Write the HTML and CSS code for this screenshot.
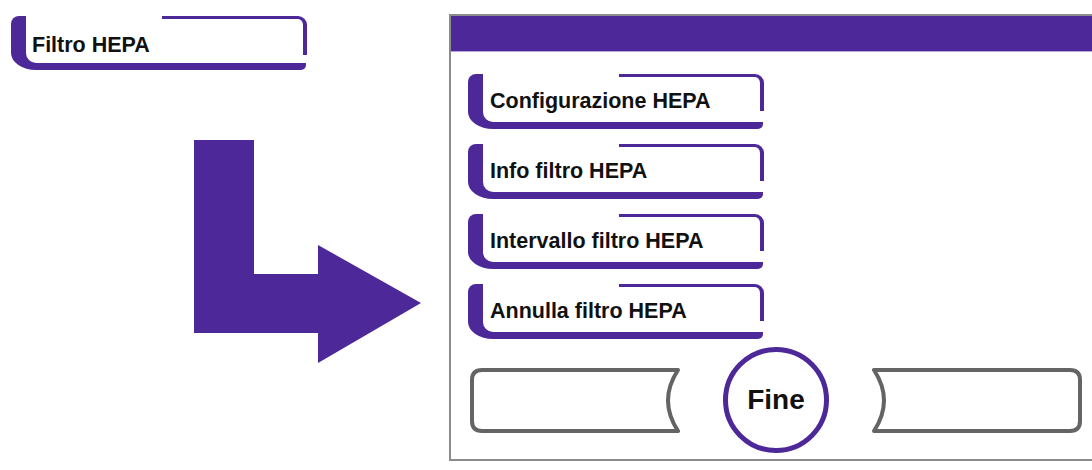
FILE: index.html
```html
<!DOCTYPE html>
<html lang="it">
<head>
    <meta charset="UTF-8">
    <meta name="viewport" content="width=device-width, initial-scale=1.0">
    <title>Filtro HEPA</title>
    <link rel="stylesheet" href="styles.css">
</head>
<body>
    <div class="page">
        <div class="side">
            <div class="tab tab-source">Filtro HEPA</div>

            <!-- arrow pointing into the submenu -->
            <svg class="arrow" width="227" height="223" viewBox="0 0 227 223">
                <polygon points="0,0 60,0 60,134 124,134 124,105 227,163 124,223 124,193 0,193" fill="#4d2899"/>
            </svg>
        </div>

        <div class="panel">
            <div class="panel-header"></div>

            <div class="menu">
                <div class="tab">Configurazione HEPA</div>
                <div class="tab">Info filtro HEPA</div>
                <div class="tab">Intervallo filtro HEPA</div>
                <div class="tab">Annulla filtro HEPA</div>
            </div>

            <div class="controls">
                <svg class="soft-key" width="210" height="65" viewBox="0 0 210 65">
                    <path d="M12 2 H208 Q188 32.5 208 63 H12 Q2 63 2 53 V12 Q2 2 12 2 Z"/>
                </svg>
                <div class="done-btn">Fine</div>
                <svg class="soft-key" width="210" height="65" viewBox="0 0 210 65">
                    <path d="M2 2 H198 Q208 2 208 12 V53 Q208 63 198 63 H2 Q22 32.5 2 2 Z"/>
                </svg>
            </div>
        </div>
    </div>
</body>
</html>
```

FILE: styles.css
```css
:root {
    --purple: #4d2899;
    --purple-light: #b8a3e3;
    --frame: #8c8c8c;
    --key: #646464;
    --ink: #111111;
}
html, body {
    margin: 0;
    padding: 0;
    background: #ffffff;
    overflow: hidden;
}
body {
    font-family: 'Liberation Sans', Arial, sans-serif;
    color: var(--ink);
    width: 1092px;
    height: 470px;
}
.page {
    display: flex;
    height: 100%;
}
.side {
    width: 449px;
    flex-shrink: 0;
    padding: 16px 0 0 11px;
    box-sizing: border-box;
}

/* menu tab: thick left bar, bottom bar and a thin corner on the top right */
.tab {
    position: relative;
    box-sizing: border-box;
    width: 295px;
    height: 55px;
    border-left: 15px solid var(--purple);
    border-bottom: 7px solid var(--purple);
    border-radius: 8px 0 5px 25px / 8px 0 5px 17px;
    padding: 15px 0 0 7px;
    font-size: 21.5px;
    font-weight: bold;
    line-height: 24px;
    white-space: nowrap;
}
.tab::before {
    content: "";
    position: absolute;
    top: 0;
    right: -1px;
    width: 145px;
    height: 37px;
    box-sizing: border-box;
    border-top: 3px solid var(--purple);
    border-right: 4px solid var(--purple);
    border-top-right-radius: 9px;
}
.tab-source {
    height: 54px;
    padding-top: 17px;
    padding-left: 6px;
}
.tab-source::before {
    height: 39px;
}
.arrow {
    display: block;
    margin: 70px 0 0 183px;
}

.panel {
    flex: 1;
    margin-top: 14px;
    height: 447px;
    box-sizing: border-box;
    border-top: 2px solid var(--frame);
    border-left: 2px solid var(--frame);
    border-bottom: 2px solid var(--frame);
    display: flex;
    flex-direction: column;
}
.panel-header {
    height: 35px;
    background: var(--purple);
    border-bottom: 1px solid var(--purple-light);
}
.menu {
    display: flex;
    flex-direction: column;
    gap: 15px;
    padding: 22px 0 0 17px;
}
.controls {
    display: flex;
    align-items: center;
    gap: 43px;
    padding: 8px 0 0 19px;
}
.soft-key path {
    fill: #ffffff;
    stroke: var(--key);
    stroke-width: 4;
    stroke-linejoin: round;
}
.done-btn {
    width: 106px;
    height: 106px;
    box-sizing: border-box;
    border: 5px solid var(--purple);
    border-radius: 50%;
    display: flex;
    align-items: center;
    justify-content: center;
    font-size: 28px;
    font-weight: bold;
}
```
